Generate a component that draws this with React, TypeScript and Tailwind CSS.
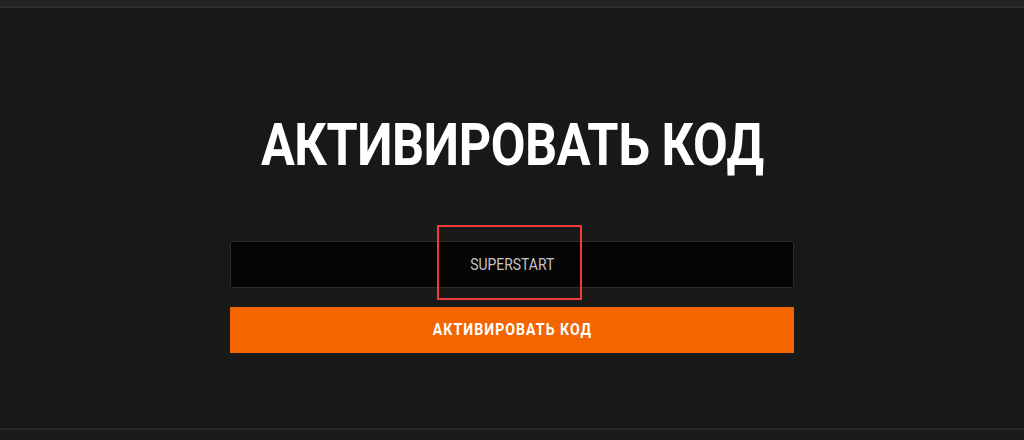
import React from "react";

export default function App() {
  return (
    <div className="w-[1024px] h-[440px] overflow-hidden bg-[#181818] flex flex-col" style={{ fontFamily: "Roboto, 'Liberation Sans', sans-serif" }}>
      <div className="h-[6px] bg-[#222222] shrink-0" />
      <div className="h-[2px] bg-[#2e2e2e] shrink-0" />
      <div className="flex-1 flex flex-col items-center bg-[#181818]">
        <h1 className="mt-[107px] h-[60px] flex items-center justify-center">
          <span className="inline-block text-white font-bold text-[60px] leading-none tracking-[-0.5px] scale-x-[0.84] whitespace-nowrap">
            АКТИВИРОВАТЬ КОД
          </span>
        </h1>
        <div className="mt-[66px] w-[564px] flex flex-col">
          <div className="relative h-[47px] bg-[#050505] border border-[#2c2c2c] rounded-[2px] flex items-center justify-center">
            <span className="inline-block text-[#c4c4c4] text-[16px] scale-x-[0.87] leading-none">SUPERSTART</span>
            <div className="absolute left-[206px] top-[-17px] w-[145px] h-[75px] border-2 border-[#ef3b3b]" />
          </div>
          <div className="mt-[19px] h-[46px] bg-[#f26500] flex items-center justify-center">
            <span className="inline-block text-white font-bold text-[16px] tracking-[1.2px] scale-x-[0.88] leading-none whitespace-nowrap">
              АКТИВИРОВАТЬ КОД
            </span>
          </div>
        </div>
      </div>
      <div className="h-[2px] bg-[#262626] shrink-0" />
      <div className="h-[10px] bg-[#1b1b1b] shrink-0" />
    </div>
  );
}
